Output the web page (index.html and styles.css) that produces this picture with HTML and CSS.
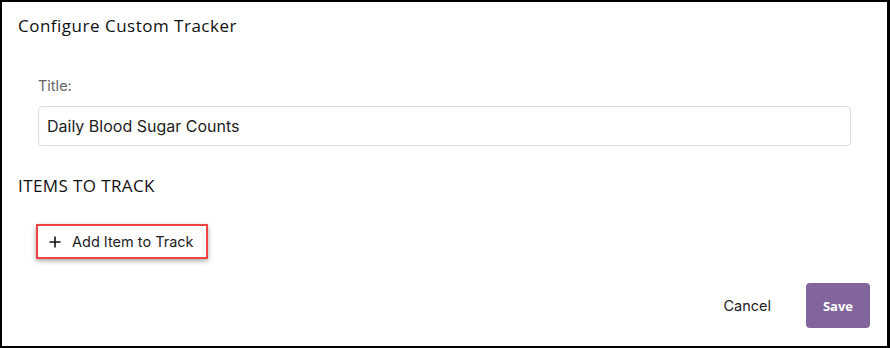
FILE: index.html
```html
<!DOCTYPE html>
<html>
<head>
<meta charset="utf-8">
<link rel="stylesheet" href="styles.css">
</head>
<body>
<div class="dialog">
  <h1 class="heading">Configure Custom Tracker</h1>
  <div class="field">
    <label class="label">Title:</label>
    <div class="input">Daily Blood Sugar Counts</div>
  </div>
  <h2 class="section">ITEMS TO TRACK</h2>
  <div class="add-wrap">
    <div class="add-btn">
      <svg class="plus" width="12" height="12" viewBox="0 0 12 12"><path d="M6 0.5V11.5M0.5 6H11.5" stroke="#111" stroke-width="1.6" fill="none"/></svg>
      <span>Add Item to Track</span>
    </div>
  </div>
  <div class="actions">
    <span class="cancel">Cancel</span>
    <span class="save">Save</span>
  </div>
</div>
</body>
</html>
```
FILE: styles.css
```css
* { box-sizing: border-box; }
html, body { margin: 0; padding: 0; background: #fff; }
body { width: 890px; height: 348px; font-family: Inter, "Noto Sans", sans-serif; color: #222; }
.dialog {
  width: 890px; height: 348px;
  border: 2px solid #000; border-right-width: 3px;
  padding: 0 16px;
  display: flex; flex-direction: column;
}
.heading {
  margin: 14px 0 0; font-size: 17px; font-weight: 500; color: #111;
  font-family: "Open Sans", Inter, sans-serif; letter-spacing: 0.5px; line-height: 20px;
}
.field { padding: 0 20px; margin-top: 42px; }
.label { display: block; font-size: 14.5px; color: #666; line-height: 16px; }
.input {
  margin-top: 12px; height: 40px; border: 1px solid #ddd; border-radius: 4px;
  padding: 0 8px; font-size: 16px; line-height: 38px; color: #222;
}
.section {
  margin: 30px 0 0; font-size: 17px; font-weight: 500; color: #111; line-height: 20px;
  font-family: "Open Sans", Inter, sans-serif; letter-spacing: 0.4px;
}
.add-wrap { margin-top: 28px; padding-left: 18px; display: flex; }
.add-btn {
  display: flex; align-items: center; gap: 11px;
  height: 35px; padding: 0 12px 0 11px;
  border: 2px solid #f04444;
  box-shadow: 0 2px 5px rgba(0,0,0,0.35);
  font-size: 14.5px; color: #222;
}
.actions {
  display: flex; justify-content: flex-end; align-items: center;
  margin-top: 24px; padding-right: 1px;
}
.cancel { font-size: 14.5px; color: #222; margin-right: 35px; }
.save {
  width: 64px; height: 45px; border-radius: 4px; background: #81659c;
  color: #fff; font-weight: 700; font-size: 13px;
  display: flex; align-items: center; justify-content: center;
  font-family: "Open Sans", sans-serif;
}
```
